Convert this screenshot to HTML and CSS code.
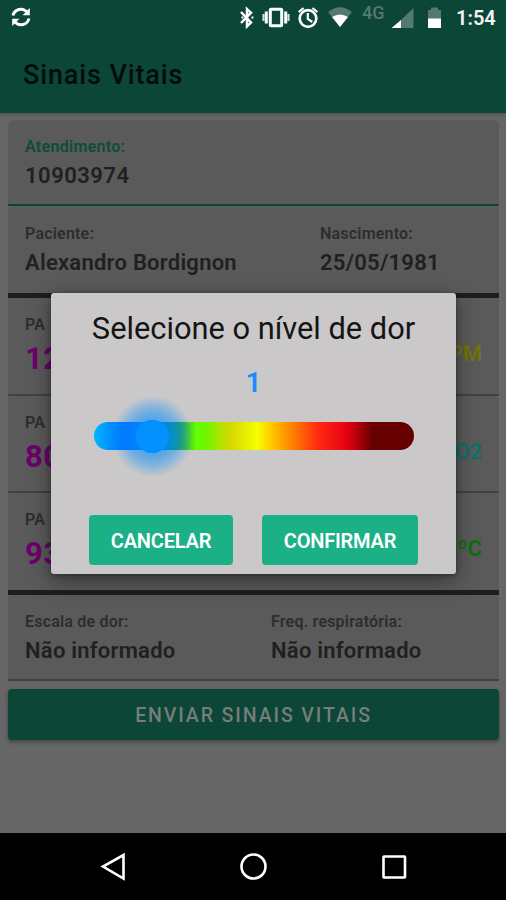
FILE: index.html
```html
<!DOCTYPE html>
<html lang="pt-BR">
<head>
<meta charset="utf-8">
<title>Sinais Vitais</title>
<link rel="stylesheet" href="styles.css">
</head>
<body>
<div class="screen">
  <header class="header">
    <div class="status">
      <svg class="sync" width="20" height="20" viewBox="0 0 20 20"><g fill="none" stroke="#fff" stroke-width="2.9"><path d="M2 8.5A8 8 0 0 1 16 5.2"/><path d="M18 11.5A8 8 0 0 1 4 14.8"/></g><path fill="#fff" d="M18.800 1v7.200h-7.200zM1.200 19v-7.200h7.200z"/></svg>
      <svg class="icons" width="210" height="32" viewBox="0 0 210 32">
        <path d="M2 12l10 10.500L8 26.300V9L12 12.700 2 23" fill="none" stroke="#fff" stroke-width="2.500"/>
        <path d="M2.500 17.500h2M12.500 17.500h2" stroke="#fff" stroke-width="2"/>
        <g fill="none" stroke="#fff"><rect x="31.300" y="9.300" width="11.400" height="16.400" rx=".8" stroke-width="3"/><path stroke-width="3" d="M27.300 11.500v12M46.700 11.500v12"/><path stroke-width="2.200" opacity=".8" d="M24.500 14v7M49.500 14v7"/></g>
        <g fill="none" stroke="#fff"><circle cx="69" cy="18.500" r="8.300" stroke-width="2.700"/><path stroke-width="2.200" d="M68.800 13v6l4.500 3M59.600 12l5-4M78.400 12l-5-4"/></g>
        <path fill="#54796e" d="M89 12q12-9.500 24 0L101 27z"/><path fill="#fff" d="M93 17q8-5 16 0l-8 10z"/>
        <text class="network" x="123" y="19">4G</text>
        <path fill="#54796e" d="M174.500 8v20h-21z"/><path fill="#fff" d="M162 20v8h-9.500z"/>
        <path fill="#54796e" d="M189 10h3V7.500h7V10h3v9h-13z"/><path fill="#fff" d="M189 18.500h13V28h-13z"/>
      </svg>
      <span class="clock">1:54</span>
    </div>
    <h1 class="title">Sinais Vitais</h1>
  </header>
  <main class="content">
    <section class="row row-visit"><div class="field"><span class="label accent">Atendimento:</span><span class="value number">10903974</span></div></section>
    <section class="row row-patient">
      <div class="field name"><span class="label">Paciente:</span><span class="value">Alexandro Bordignon</span></div>
      <div class="field"><span class="label">Nascimento:</span><span class="value">25/05/1981</span></div>
    </section>
    <section class="row vital first"><div class="field"><span class="label">PA</span><span class="reading">12</span></div><span class="unit yellow">BPM</span></section>
    <section class="row vital"><div class="field"><span class="label">PA</span><span class="reading">80</span></div><span class="unit cyan">SpO2</span></section>
    <section class="row vital last"><div class="field"><span class="label">PA</span><span class="reading">93</span></div><span class="unit green">ºC</span></section>
    <section class="row row-notes">
      <div class="field pain"><span class="label">Escala de dor:</span><span class="value">Não informado</span></div>
      <div class="field"><span class="label">Freq. respiratória:</span><span class="value">Não informado</span></div>
    </section>
    <button class="send">ENVIAR SINAIS VITAIS</button>
  </main>
  <nav class="nav">
    <svg width="506" height="67" viewBox="0 0 506 67" fill="none" stroke="#fff" stroke-width="2.600"><path d="M123.500 22v23.500L103 33.500z"/><circle cx="253.500" cy="33.500" r="12"/><rect x="383.500" y="23.500" width="21.500" height="21" rx=".5"/></svg>
  </nav>
  <div class="dialog">
    <h2 class="question">Selecione o nível de dor</h2>
    <div class="level">1</div>
    <div class="slider"><div class="thumb"></div></div>
    <div class="actions"><button class="cancel">CANCELAR</button><button class="confirm">CONFIRMAR</button></div>
  </div>
</div>
</body>
</html>
```
FILE: styles.css
```css
* { box-sizing: border-box; }
body { margin: 0; font-family: Roboto, "Liberation Sans", sans-serif; }
button { border: 0; padding: 0; font-family: inherit; }
.screen { position: relative; width: 506px; height: 900px; display: flex; flex-direction: column; background: #666; overflow: hidden; }
.header { height: 113px; flex: none; background: #0b4636; box-shadow: 0 1px 4px rgba(0,0,0,.25); }
.status { height: 36px; display: flex; align-items: flex-start; }
.sync { margin: 7px 0 0 11px; }
.icons { margin-left: 208px; flex: none; }
.network { font-size: 18px; font-weight: 500; fill: #54796e; }
.clock { margin-left: 7px; padding-top: 6px; font-size: 20px; line-height: 24px; font-weight: 600; color: #f4f4f4; white-space: nowrap; }
.title { margin: 22px 0 0 23px; font-size: 27px; line-height: 34px; font-weight: 500; letter-spacing: .87px; color: #020d0a; }
.content { flex: 1; padding: 7px 7px 0 8px; display: flex; flex-direction: column; }
.row { display: flex; flex: none; background: #5a5a5a; padding: 17px 17px 0; border-bottom: 2px solid #414141; border-radius: 4px 4px 0 0; }
.field { display: flex; flex-direction: column; }
.label { font-size: 16px; line-height: 20px; font-weight: 600; color: #2d2d2d; letter-spacing: .2px; white-space: nowrap; }
.accent { color: #0b4d38; letter-spacing: .3px; }
.value { margin-top: 5px; font-size: 22px; line-height: 28px; font-weight: 600; letter-spacing: .25px; color: #202020; white-space: nowrap; }
.number { letter-spacing: .5px; }
.row-visit { height: 86px; border-color: #0b4636; border-radius: 6px 6px 0 0; }
.row-patient { height: 92px; padding-top: 18px; border-bottom: 5px solid #1e1e1e; }
.name { width: 295px; }
.vital { height: 97px; justify-content: space-between; }
.first { height: 98px; }
.last { height: 102px; border-bottom: 5px solid #1e1e1e; }
.reading { margin-top: 6px; font-size: 31px; line-height: 36px; font-weight: 700; letter-spacing: .5px; color: #6c006e; }
.unit { margin-top: 25px; font-size: 22px; line-height: 28px; font-weight: 600; }
.yellow { color: #73730a; }
.cyan { color: #0a736a; }
.green { color: #0a700a; }
.row-notes { height: 86px; }
.pain { width: 246px; }
.send { width: 491px; height: 51px; margin-top: 8px; padding-top: 2px; border-radius: 4px; background: #0b4636; color: #777d7b; font-size: 19.5px; font-weight: 500; letter-spacing: 1.9px; box-shadow: 0 2px 4px rgba(0,0,0,.35); }
.nav { height: 67px; flex: none; background: #000; }
.nav svg { display: block; }
.dialog { position: absolute; left: 51px; top: 293px; width: 405px; height: 281px; border-radius: 3px; background: #cac8c9; box-shadow: 0 7px 22px rgba(0,0,0,.4), 0 1px 5px rgba(0,0,0,.35); display: flex; flex-direction: column; align-items: center; }
.question { margin: 16px 0 0; font-size: 30.8px; line-height: 40px; font-weight: 400; color: #141414; white-space: nowrap; }
.level { margin-top: 18px; font-size: 28px; line-height: 32px; font-weight: 600; color: #1c8bff; }
.slider { width: 320px; height: 28px; margin-top: 23px; border-radius: 14px; background: linear-gradient(90deg,#00b7ff 0,#0098ff 4%,#006aff 10%,#006aff 15%,#008b8b 24%,#299c56 27%,#64ff00 32%,#65f900 34%,#cfda00 42%,#dcdc00 44%,#f5ff00 51%,#ffda00 54%,#ff8a00 61%,#ff2a10 70%,#e60012 79%,#660000 87%,#660000 100%); }
.thumb { width: 33px; height: 33px; margin: -2px 0 0 42px; border-radius: 50%; background: #0590ff; position: relative; }
.thumb::before { content: ""; position: absolute; inset: -24px; border-radius: 50%; background: radial-gradient(closest-side, rgba(5,144,255,.65) 38%, rgba(5,144,255,.4) 68%, rgba(5,144,255,0) 100%); }
.thumb::after { content: ""; position: absolute; inset: 0; border-radius: 50%; background: #0590ff; }
.actions { display: flex; gap: 29px; margin-top: 65px; }
.cancel, .confirm { height: 50px; padding-top: 1px; border-radius: 4px; background: #1bb086; color: #fff; font-size: 20px; font-weight: 600; letter-spacing: -.2px; }
.cancel { width: 144px; }
.confirm { width: 156px; }
```
